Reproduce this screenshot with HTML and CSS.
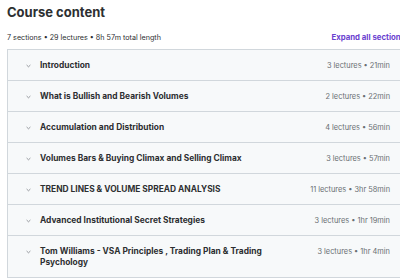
FILE: index.html
```html
<!DOCTYPE html>
<html lang="en-us">
  <head>
    <meta charset="utf-8">
    <title>Course content</title>
    <link rel="stylesheet" href="styles.css">
  </head>
  <body>

    <!-- Course content -->
    <div class="curriculum">
      <h2 class="curriculum-title">Course content</h2>

      <div class="curriculum-header">
        <span class="curriculum-stats">7 sections • 29 lectures • 8h 57m total length</span>
        <a href="#" class="expand-all">Expand all sections</a>
      </div>

      <div class="section-list">
        <div class="section-row">
          <span class="chevron"><svg width="5" height="4" viewBox="0 0 5 4"><path d="M0.6 1 L2.5 2.8 L4.4 1" fill="none" stroke="#7d8286" stroke-width="0.8"/></svg></span>
          <span class="section-title">Introduction</span>
          <span class="section-meta">3 lectures • 21min</span>
        </div>
        <div class="section-row">
          <span class="chevron"><svg width="5" height="4" viewBox="0 0 5 4"><path d="M0.6 1 L2.5 2.8 L4.4 1" fill="none" stroke="#7d8286" stroke-width="0.8"/></svg></span>
          <span class="section-title">What is Bullish and Bearish Volumes</span>
          <span class="section-meta">2 lectures • 22min</span>
        </div>
        <div class="section-row">
          <span class="chevron"><svg width="5" height="4" viewBox="0 0 5 4"><path d="M0.6 1 L2.5 2.8 L4.4 1" fill="none" stroke="#7d8286" stroke-width="0.8"/></svg></span>
          <span class="section-title">Accumulation and Distribution</span>
          <span class="section-meta">4 lectures • 56min</span>
        </div>
        <div class="section-row">
          <span class="chevron"><svg width="5" height="4" viewBox="0 0 5 4"><path d="M0.6 1 L2.5 2.8 L4.4 1" fill="none" stroke="#7d8286" stroke-width="0.8"/></svg></span>
          <span class="section-title">Volumes Bars &amp; Buying Climax and Selling Climax</span>
          <span class="section-meta">3 lectures • 57min</span>
        </div>
        <div class="section-row">
          <span class="chevron"><svg width="5" height="4" viewBox="0 0 5 4"><path d="M0.6 1 L2.5 2.8 L4.4 1" fill="none" stroke="#7d8286" stroke-width="0.8"/></svg></span>
          <span class="section-title">TREND LINES &amp; VOLUME SPREAD ANALYSIS</span>
          <span class="section-meta">11 lectures • 3hr 58min</span>
        </div>
        <div class="section-row">
          <span class="chevron"><svg width="5" height="4" viewBox="0 0 5 4"><path d="M0.6 1 L2.5 2.8 L4.4 1" fill="none" stroke="#7d8286" stroke-width="0.8"/></svg></span>
          <span class="section-title">Advanced Institutional Secret Strategies</span>
          <span class="section-meta">3 lectures • 1hr 19min</span>
        </div>
        <div class="section-row">
          <span class="chevron"><svg width="5" height="4" viewBox="0 0 5 4"><path d="M0.6 1 L2.5 2.8 L4.4 1" fill="none" stroke="#7d8286" stroke-width="0.8"/></svg></span>
          <span class="section-title">Tom Williams - VSA Principles , Trading Plan &amp; Trading Psychology</span>
          <span class="section-meta">3 lectures • 1hr 4min</span>
        </div>
      </div>
    </div>

  </body>
</html>
```

FILE: styles.css
```css
html, body {
  margin: 0;
  overflow: hidden;
  background-color: #fff;
}

body {
  font-family: Inter, "Noto Sans", sans-serif;
  color: #2d2f31;
}

/* Wrapper, a bit wider than the window like the original */
.curriculum {
  width: 398px;
  padding-left: 7px;
}

.curriculum-title {
  margin: 0;
  padding-top: 3px;
  font-size: 13px;
  font-weight: 700;
  line-height: 18px;
}

/* Stats line + expand link */
.curriculum-header {
  display: flex;
  justify-content: space-between;
  align-items: center;
  margin-top: 11px;
  height: 10px;
}

.curriculum-stats {
  font-size: 7.2px;
  color: #2d2f31;
}

.expand-all {
  font-size: 7.8px;
  font-weight: 700;
  color: #6a3fcf;
  text-decoration: none;
  white-space: nowrap;
}

/* Section rows */
.section-list {
  margin-top: 7px;
  border: 1px solid #d1d7dc;
  border-right: none;
}

.section-row {
  display: flex;
  align-items: flex-start;
  background-color: #f7f9fa;
  padding: 10px 0 9px 18px;
  border-top: 1px solid #d1d7dc;
  line-height: 11px;
}

.section-row:first-child {
  border-top: none;
}

.chevron {
  width: 14px;
  height: 11px;
  display: flex;
  align-items: center;
}

.section-title {
  flex: 1;
  font-size: 8.4px;
  font-weight: 700;
  padding-right: 16px;
}

.section-meta {
  width: 100px;
  text-align: right;
  padding-right: 15px;
  font-size: 7.4px;
  color: #6a6f73;
  white-space: nowrap;
}
```
